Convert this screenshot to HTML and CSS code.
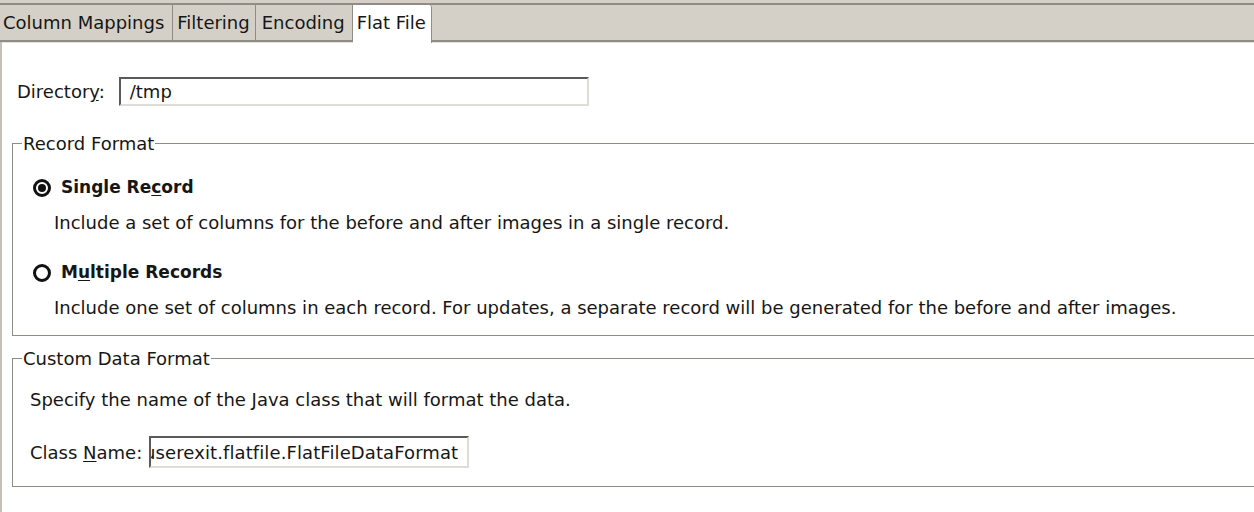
FILE: index.html
```html
<!DOCTYPE html>
<html>
<head>
<meta charset="utf-8">
<link rel="stylesheet" href="styles.css">
</head>
<body>
<div class="tabbar">
  <div class="tabs">
    <div class="tab">Column Mappings</div>
    <div class="tab">Filtering</div>
    <div class="tab wide">Encoding</div>
    <div class="tab active">Flat File</div>
  </div>
</div>
<div class="panel">
  <div class="dirrow">
    <span class="label">Director<u>y</u>:</span>
    <div class="field dirfield"><span class="val">/tmp</span></div>
  </div>

  <fieldset class="group record">
    <legend>Record Format</legend>
    <div class="option first">
      <span class="radio checked"><span class="dot"></span></span>
      <span class="optlabel">Single Re<u>c</u>ord</span>
    </div>
    <div class="desc">Include a set of columns for the before and after images in a single record.</div>
    <div class="option second">
      <span class="radio"></span>
      <span class="optlabel">M<u>u</u>ltiple Records</span>
    </div>
    <div class="desc">Include one set of columns in each record. For updates, a separate record will be generated for the before and after images.</div>
  </fieldset>

  <fieldset class="group custom">
    <legend>Custom Data Format</legend>
    <div class="specify">Specify the name of the Java class that will format the data.</div>
    <div class="classrow">
      <span class="label">Class <u>N</u>ame:</span>
      <div class="field classfield"><span class="val">userexit.flatfile.FlatFileDataFormat</span></div>
    </div>
  </fieldset>
</div>
</body>
</html>
```
FILE: styles.css
```css
html, body {
  margin: 0;
  padding: 0;
  background: #ffffff;
  overflow: hidden;
  width: 1254px;
  height: 512px;
}
body {
  font-family: "DejaVu Sans", Verdana, sans-serif;
  font-size: 18px;
  line-height: 21px;
  color: #161616;
}
u { text-decoration: underline; text-underline-offset: 2px; }

.tabbar {
  background: #d4d0c8;
  padding-top: 3px;
}
.tabs {
  display: flex;
  height: 35px;
  border-top: 2px solid #8e8c87;
  border-bottom: 2px solid #8e8c87;
  box-shadow: 0 1px 0 #e4e2dc;
}
.tab {
  display: flex;
  align-items: center;
  padding: 0 5px 0 4px;
  border-right: 1px solid #8e8c87;
}
.tab:first-child { padding-left: 3px; padding-right: 8px; }
.tab.wide { padding-left: 6px; padding-right: 7px; }
.tab.active {
  background: #ffffff;
  margin-bottom: -3px;
  padding-bottom: 3px;
  border-radius: 0 3px 0 0;
}

.panel {
  border-left: 2px solid #c4c0b8;
  padding: 35px 0 0 15px;
  height: 470px;
  box-sizing: border-box;
}

.dirrow {
  display: flex;
  align-items: center;
  gap: 14px;
}
.field {
  background: #fff;
  border-top: 2px solid #5a5a5a;
  border-left: 2px solid #5a5a5a;
  border-right: 2px solid #e0ddd6;
  border-bottom: 2px solid #e0ddd6;
  box-sizing: border-box;
  overflow: hidden;
  white-space: nowrap;
  display: flex;
  align-items: center;
}
.dirfield {
  width: 470px;
  height: 29px;
  padding-left: 9px;
}
.classfield {
  width: 320px;
  height: 32px;
  justify-content: flex-end;
  padding-right: 9px;
  letter-spacing: 0.1px;
}

.group {
  margin: 0 0 0 -5px;
  border: 1px solid #8e8c87;
  border-right: none;
  padding: 0;
  width: 1300px;
  box-sizing: border-box;
}
.group legend {
  padding: 0 1px;
  margin-left: 9px;
}
.record {
  margin-top: 27px;
  padding-bottom: 17px;
}
.custom {
  margin-top: 12px;
  padding-bottom: 18px;
}

.option {
  display: flex;
  align-items: center;
  gap: 10px;
  margin: 29px 0 0 20px;
}
.option.first { margin-top: 23px; }
.optlabel {
  font-weight: bold;
  font-size: 17px;
}
.radio {
  width: 18px;
  height: 18px;
  box-sizing: border-box;
  border: 3px solid #111;
  border-radius: 50%;
  display: flex;
  align-items: center;
  justify-content: center;
}
.dot {
  width: 8px;
  height: 8px;
  border-radius: 50%;
  background: #111;
}
.desc {
  margin: 14px 0 0 41px;
}
.specify {
  margin: 20px 0 0 17px;
}
.classrow {
  display: flex;
  align-items: center;
  gap: 7px;
  margin: 26px 0 0 17px;
}
```
